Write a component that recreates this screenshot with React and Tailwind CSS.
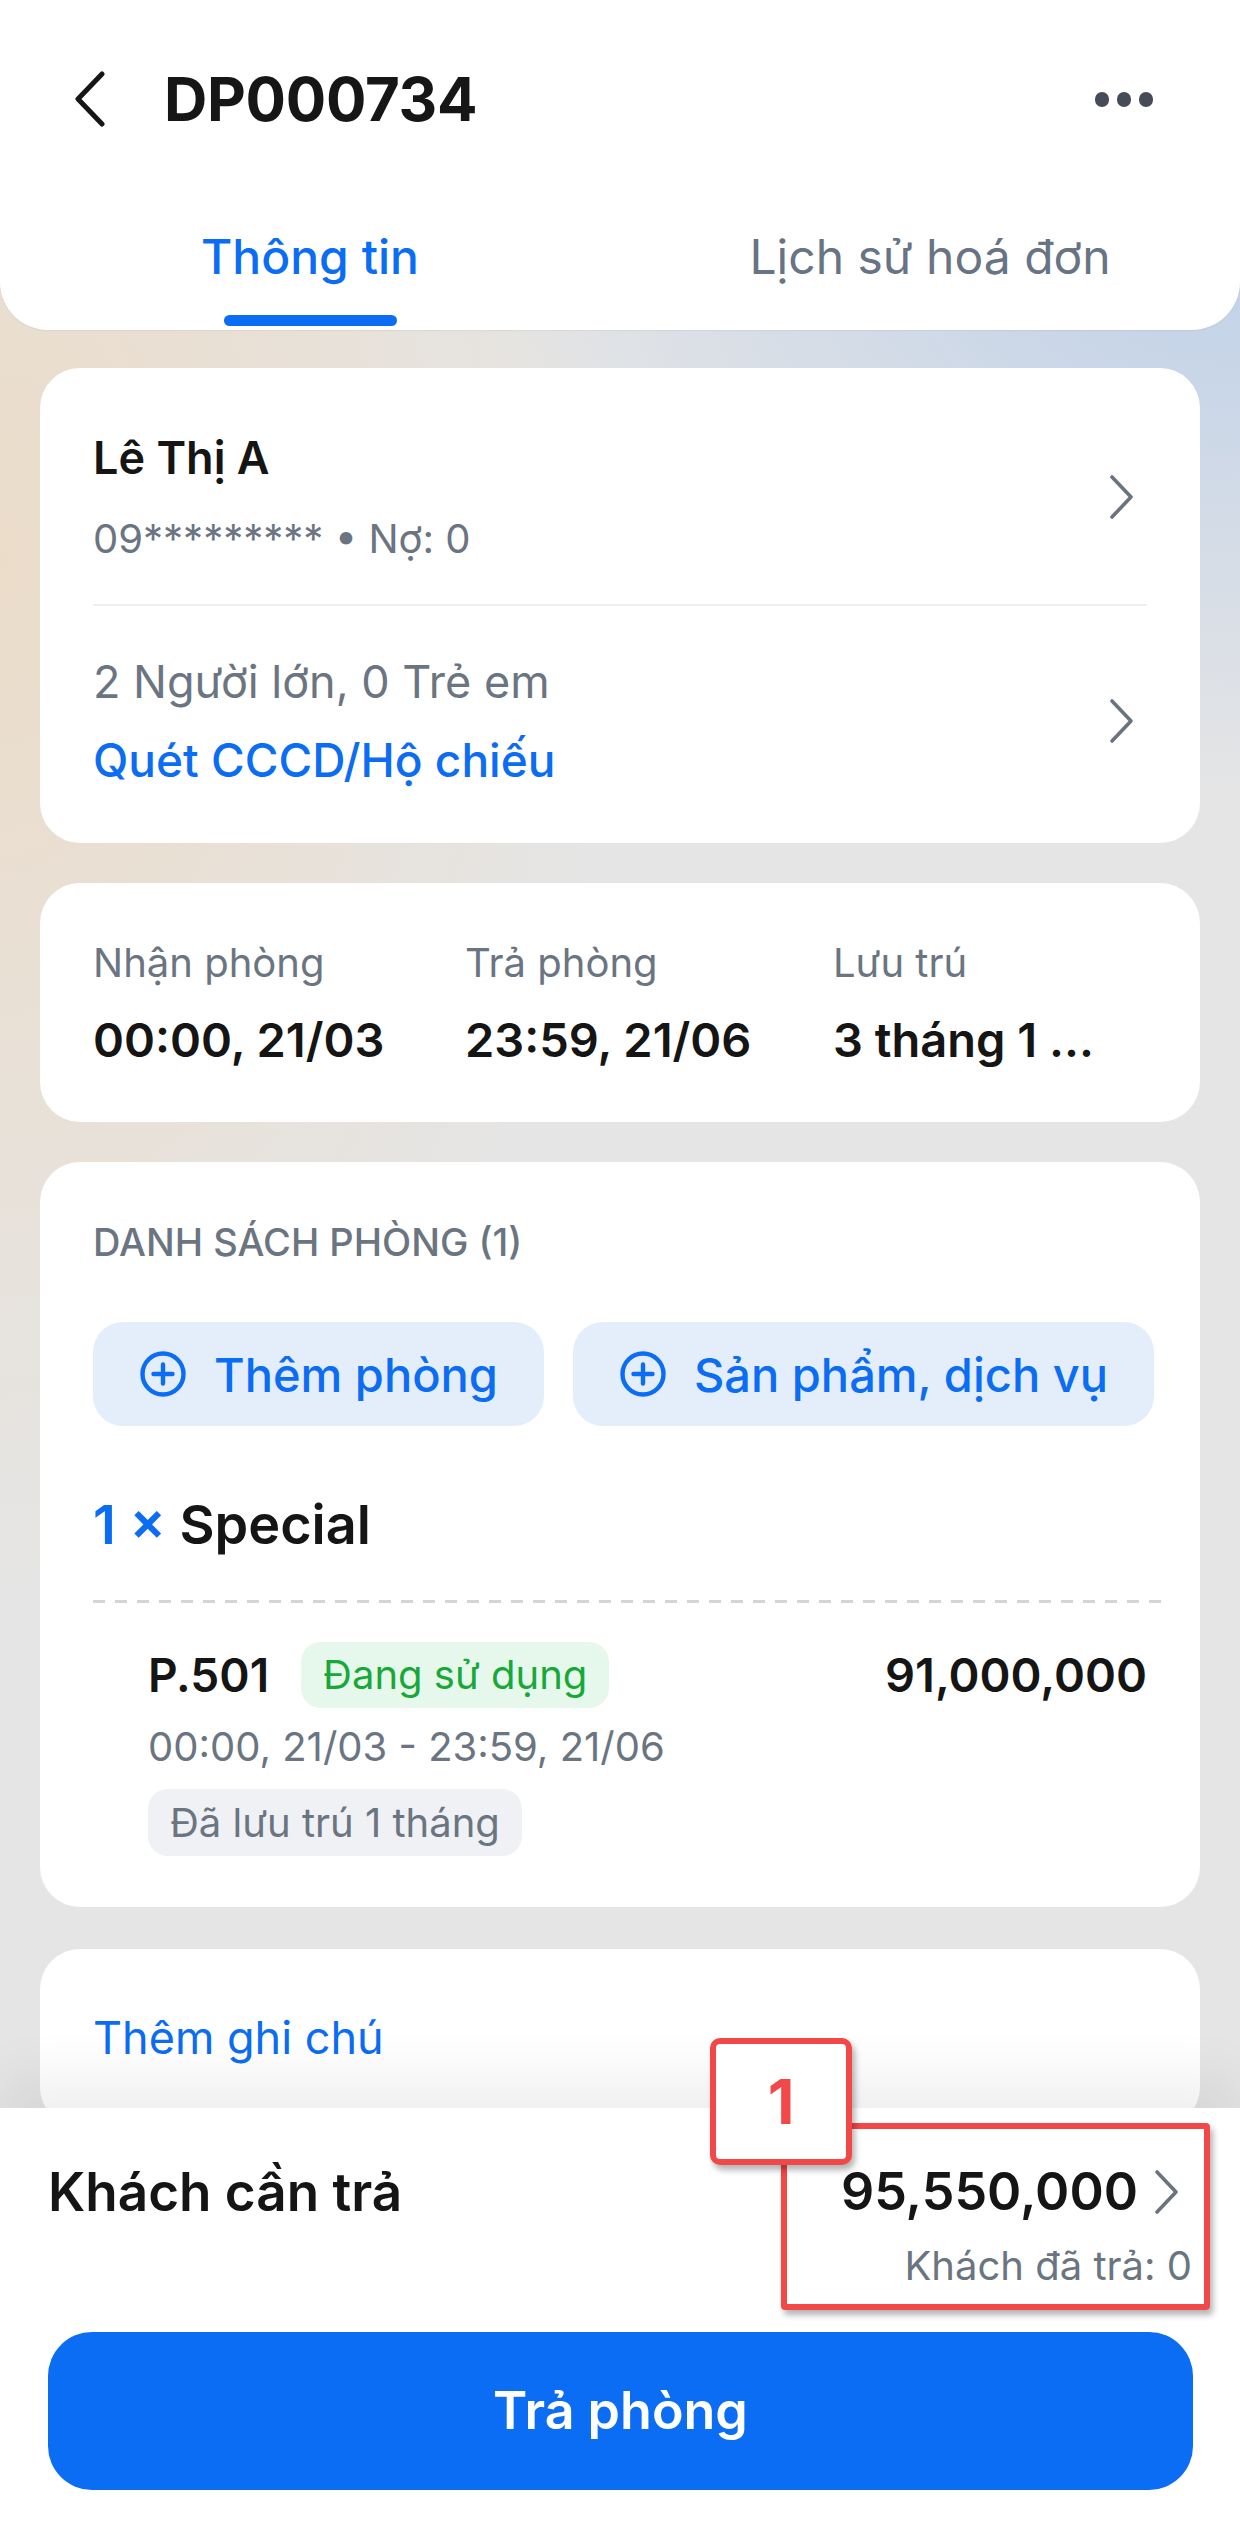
import React from "react";

const BLUE = "text-[#0b6cf4]";

function ChevronRight({ className = "" }) {
  return (
    <svg width="26" height="46" viewBox="0 0 26 46" className={className} fill="none">
      <path d="M3 3 L22 23 L3 43" stroke="#6b7280" strokeWidth="3.6" strokeLinecap="round" strokeLinejoin="round" />
    </svg>
  );
}

function PlusCircle() {
  return (
    <svg width="48" height="48" viewBox="0 0 48 48" fill="none" className="shrink-0">
      <circle cx="24" cy="24" r="20.5" stroke="#0b6cf4" strokeWidth="4.4" />
      <path d="M24 14.5 V33.5 M14.5 24 H33.5" stroke="#0b6cf4" strokeWidth="4.4" strokeLinecap="round" />
    </svg>
  );
}

export default function App() {
  return (
    <div className="relative w-[1240px] h-[2523px] overflow-hidden flex flex-col font-['Inter','Noto_Sans',sans-serif] text-[#151515] bg-[#e5e5e5] bg-[radial-gradient(ellipse_760px_620px_at_100%_180px,#bccfe9_0%,rgba(229,229,229,0)_100%),radial-gradient(ellipse_620px_1050px_at_0%_560px,#ebdcc9_0%,rgba(229,229,229,0)_100%)]">
      {/* Header */}
      <header className="shrink-0 h-[330px] bg-white rounded-b-[48px] flex flex-col shadow-[0_1px_2px_rgba(0,0,0,0.05)]">
        <div className="h-[198px] flex items-center pl-[73px] pr-[87px]">
          <svg width="34" height="56" viewBox="0 0 34 56" fill="none">
            <path d="M29 3 L5 28 L29 53" stroke="#161616" strokeWidth="5" strokeLinecap="round" strokeLinejoin="round" />
          </svg>
          <h1 className="ml-[57px] text-[60px] leading-none font-bold tracking-[-0.3px] text-[#161616]">DP000734</h1>
          <div className="ml-auto flex items-center gap-[8px]">
            <span className="w-[14px] h-[15px] rounded-full bg-[#454c57]" />
            <span className="w-[14px] h-[15px] rounded-full bg-[#454c57]" />
            <span className="w-[14px] h-[15px] rounded-full bg-[#454c57]" />
          </div>
        </div>
        <div className="flex">
          <div className="w-1/2 flex flex-col items-center pt-[29px]">
            <span className={`text-[48px] leading-[60px] font-medium ${BLUE}`}>Thông tin</span>
            <div className="mt-[28px] w-[173px] h-[11px] rounded-full bg-[#0b6cf4]" />
          </div>
          <div className="w-1/2 flex justify-center pt-[29px]">
            <span className="text-[48px] leading-[60px] text-[#687384]">Lịch sử hoá đơn</span>
          </div>
        </div>
      </header>

      {/* Scroll content */}
      <main className="flex-1 min-h-0 overflow-hidden px-[40px] pt-[38px] flex flex-col">
        {/* Card 1: guest */}
        <section className="shrink-0 bg-white rounded-[40px] px-[53px]">
          <div className="flex items-center pt-[62px] pb-[40px]">
            <div className="flex-1">
              <div className="text-[45px] leading-[56px] font-semibold">Lê Thị A</div>
              <div className="mt-[28px] text-[40px] leading-[50px] text-[#6b7582]">09********* • Nợ: 0</div>
            </div>
            <ChevronRight className="mr-[12px]" />
          </div>
          <div className="h-[2px] bg-[#eeeff1]" />
          <div className="flex items-center pt-[48px] pb-[55px]">
            <div className="flex-1">
              <div className="text-[45px] leading-[56px] text-[#6b7582]">2 Người lớn, 0 Trẻ em</div>
              <div className={`mt-[22px] text-[46px] leading-[56px] font-medium ${BLUE}`}>Quét CCCD/Hộ chiếu</div>
            </div>
            <ChevronRight className="mr-[12px]" />
          </div>
        </section>

        {/* Card 2: dates */}
        <section className="shrink-0 mt-[40px] bg-white rounded-[40px] pl-[53px] pr-[53px] pt-[55px] pb-[53px] grid grid-cols-[372px_368px_1fr]">
          <div>
            <div className="text-[40px] leading-[50px] text-[#6b7582]">Nhận phòng</div>
            <div className="mt-[23px] text-[47px] leading-[58px] font-semibold">00:00, 21/03</div>
          </div>
          <div>
            <div className="text-[40px] leading-[50px] text-[#6b7582]">Trả phòng</div>
            <div className="mt-[23px] text-[47px] leading-[58px] font-semibold">23:59, 21/06</div>
          </div>
          <div className="min-w-0">
            <div className="text-[40px] leading-[50px] text-[#6b7582]">Lưu trú</div>
            <div className="mt-[23px] text-[47px] leading-[58px] font-semibold whitespace-nowrap">3 tháng 1 ...</div>
          </div>
        </section>

        {/* Card 3: rooms */}
        <section className="shrink-0 mt-[40px] bg-white rounded-[40px] px-[53px] pt-[57px] pb-[51px]">
          <div className="text-[38px] leading-[46px] font-medium text-[#6b7582] uppercase">DANH SÁCH PHÒNG (1)</div>
          <div className="mt-[57px] flex gap-[29px]">
            <button className="shrink-0 h-[104px] rounded-[30px] bg-[#e4eefb] pl-[46px] pr-[46px] flex items-center gap-[27px] whitespace-nowrap">
              <PlusCircle />
              <span className={`text-[47px] leading-none font-medium ${BLUE}`}>Thêm phòng</span>
            </button>
            <button className="shrink-0 h-[104px] rounded-[30px] bg-[#e4eefb] pl-[46px] pr-[46px] flex items-center gap-[27px] whitespace-nowrap">
              <PlusCircle />
              <span className={`text-[47px] leading-none font-medium ${BLUE}`}>Sản phẩm, dịch vụ</span>
            </button>
          </div>
          <div className="mt-[66px] text-[54px] leading-[66px] font-semibold">
            <span className={BLUE}>1 ×</span> Special
          </div>
          <div className="mt-[42px] mr-[-14px] h-[3px] bg-[repeating-linear-gradient(to_right,#d3d5d9_0px,#d3d5d9_12px,transparent_12px,transparent_22px)]" />
          <div className="mt-[39px] pl-[55px]">
            <div className="h-[66px] flex items-center">
              <span className="text-[46px] leading-[56px] font-semibold">P.501</span>
              <span className="ml-[32px] h-[66px] px-[22px] rounded-[20px] bg-[#e6f8eb] text-[#18a83a] text-[40px] leading-[66px]">Đang sử dụng</span>
              <span className="ml-auto text-[47px] leading-[56px] font-semibold">91,000,000</span>
            </div>
            <div className="mt-[14px] text-[40px] leading-[50px] text-[#6b7582]">00:00, 21/03 - 23:59, 21/06</div>
            <div className="mt-[17px] inline-flex h-[67px] items-center px-[22px] rounded-[20px] bg-[#eff1f4] text-[40px] leading-none text-[#6b7582]">Đã lưu trú 1 tháng</div>
          </div>
        </section>

        {/* Card 4: note */}
        <section className="shrink-0 mt-[42px] bg-white rounded-[40px] px-[53px] pt-[61px] pb-[61px]">
          <div className={`text-[45px] leading-[56px] ${BLUE}`}>Thêm ghi chú</div>
        </section>
      </main>

      {/* Bottom sheet */}
      <footer className="relative z-10 shrink-0 h-[415px] bg-white shadow-[0_-28px_56px_rgba(0,0,0,0.07)] pt-[53px]">
        <div className="flex justify-between pl-[48px] pr-[48px]">
          <div className="text-[53px] leading-[62px] font-semibold">Khách cần trả</div>
          <div className="flex flex-col items-end">
            <div className="flex items-center">
              <span className="text-[52px] leading-[62px] font-semibold">95,550,000</span>
              <ChevronRight className="ml-[16px] mr-[12px]" />
            </div>
            <div className="mt-[18px] text-[40px] leading-[50px] text-[#6b7582]">Khách đã trả: 0</div>
          </div>
        </div>
        <button className="mt-[41px] mx-[48px] w-[1145px] h-[158px] rounded-[44px] bg-[#0b6cf4] text-white text-[52px] font-semibold flex items-center justify-center">
          Trả phòng
        </button>
      </footer>

      {/* Annotation overlay */}
      <div className="absolute z-20 left-[781px] top-[2123px] w-[429px] h-[187px] border-[6px] border-[#f24848] rounded-[4px] shadow-[3px_5px_6px_rgba(0,0,0,0.3)]" />
      <div className="absolute z-30 left-[710px] top-[2038px] w-[142px] h-[127px] border-[6px] border-[#f24848] rounded-[10px] bg-white shadow-[3px_5px_6px_rgba(0,0,0,0.3)] flex items-center justify-center">
        <span className="text-[62px] leading-none font-bold text-[#f24848]">1</span>
      </div>
    </div>
  );
}
